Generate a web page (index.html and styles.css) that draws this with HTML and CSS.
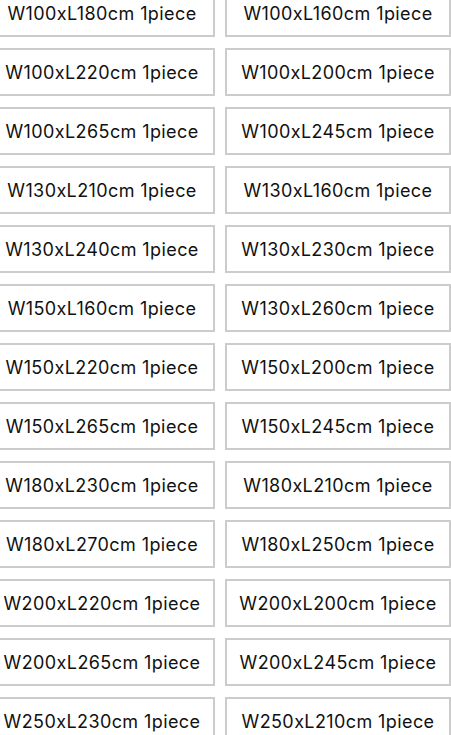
FILE: index.html
```html
<!DOCTYPE html>
<html>
<head>
<meta charset="utf-8">
<link rel="stylesheet" href="styles.css">
</head>
<body>
<div class="options">
  <button class="opt">W100xL180cm 1piece</button>
  <button class="opt">W100xL160cm 1piece</button>
  <button class="opt">W100xL220cm 1piece</button>
  <button class="opt">W100xL200cm 1piece</button>
  <button class="opt">W100xL265cm 1piece</button>
  <button class="opt">W100xL245cm 1piece</button>
  <button class="opt">W130xL210cm 1piece</button>
  <button class="opt">W130xL160cm 1piece</button>
  <button class="opt">W130xL240cm 1piece</button>
  <button class="opt">W130xL230cm 1piece</button>
  <button class="opt">W150xL160cm 1piece</button>
  <button class="opt">W130xL260cm 1piece</button>
  <button class="opt">W150xL220cm 1piece</button>
  <button class="opt">W150xL200cm 1piece</button>
  <button class="opt">W150xL265cm 1piece</button>
  <button class="opt">W150xL245cm 1piece</button>
  <button class="opt">W180xL230cm 1piece</button>
  <button class="opt">W180xL210cm 1piece</button>
  <button class="opt">W180xL270cm 1piece</button>
  <button class="opt">W180xL250cm 1piece</button>
  <button class="opt">W200xL220cm 1piece</button>
  <button class="opt">W200xL200cm 1piece</button>
  <button class="opt">W200xL265cm 1piece</button>
  <button class="opt">W200xL245cm 1piece</button>
  <button class="opt">W250xL230cm 1piece</button>
  <button class="opt">W250xL210cm 1piece</button>
</div>
</body>
</html>
```
FILE: styles.css
```css
html, body {
  margin: 0;
  padding: 0;
  background: #fff;
  overflow: hidden;
}
.options {
  display: grid;
  grid-template-columns: 226px 226px;
  column-gap: 10px;
  row-gap: 11px;
  margin: -11px 0 0 -11px;
}
.opt {
  height: 48px;
  box-sizing: border-box;
  border: 2px solid #cccccc;
  background: #fff;
  color: #111;
  font-family: Inter, sans-serif;
  font-size: 18px;
  letter-spacing: 0.4px;
  padding: 0;
  display: flex;
  align-items: center;
  justify-content: center;
}
```
